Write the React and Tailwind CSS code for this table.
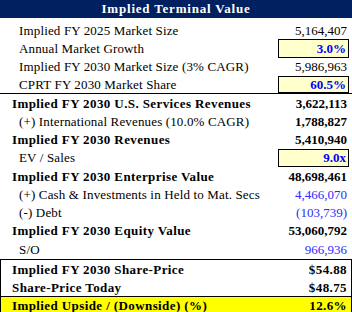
import React from "react";

const rows = [
  { label: "Implied FY 2025 Market Size", value: "5,164,407", indent: true },
  { label: "Annual Market Growth", value: "3.0%", indent: true, input: true },
  { label: "Implied FY 2030 Market Size (3% CAGR)", value: "5,986,963", indent: true },
  { label: "CPRT FY 2030 Market Share", value: "60.5%", indent: true, input: true, line: true },
  { label: "Implied FY 2030 U.S. Services Revenues", value: "3,622,113", bold: true, vbold: true },
  { label: "(+) International Revenues (10.0% CAGR)", value: "1,788,827", indent: true, vbold: true },
  { label: "Implied FY 2030 Revenues", value: "5,410,940", bold: true, vbold: true },
  { label: "EV / Sales", value: "9.0x", indent: true, input: true },
  { label: "Implied FY 2030 Enterprise Value", value: "48,698,461", bold: true, vbold: true },
  { label: "(+) Cash & Investments in Held to Mat. Secs", value: "4,466,070", indent: true, blue: true },
  { label: "(-) Debt", value: "(103,739)", indent: true, blue: true },
  { label: "Implied FY 2030 Equity Value", value: "53,060,792", bold: true, vbold: true },
  { label: "S/O", value: "966,936", indent: true, blue: true },
];

function Row({ r }) {
  return (
    <div className={r.line ? "flex h-[18.25px] items-center border-b border-black" : "flex h-[18.25px] items-center"}>
      <div className={(r.indent ? "pl-[19px] tracking-[0.15px] " : "pl-[12px] ") + (r.bold ? "font-bold tracking-[0.4px]" : "") + " flex-1 whitespace-nowrap leading-none"}>
        {r.label}
      </div>
      {r.input ? (
        <div className="mr-[3px] flex h-full w-[71px] items-center justify-end border border-black bg-[#ffffcc] pr-[2px] font-bold text-[#0000ff]">
          {r.value}
        </div>
      ) : (
        <div className={(r.vbold ? "font-bold " : "") + (r.blue ? "text-[#2b2bff] " : "") + "w-[74px] pr-[5px] text-right leading-none"}>
          {r.value}
        </div>
      )}
    </div>
  );
}

export default function App() {
  return (
    <div className="h-[312px] w-[352px] overflow-hidden bg-white font-['Liberation_Serif',serif] text-[13px] text-black">
      <div className="flex h-[18px] items-center justify-center bg-[#002060] font-bold tracking-[0.8px] text-white">
        Implied Terminal Value
      </div>
      <div className="h-[3px]" />
      {rows.map((r, i) => (
        <Row key={i} r={r} />
      ))}
      <div className="mt-[1px] border border-black font-bold tracking-[0.4px]">
        <div className="flex h-[18px] items-center justify-between pl-[11px] pr-[4px]">
          <span>Implied FY 2030 Share-Price</span>
          <span>$54.88</span>
        </div>
        <div className="flex h-[18px] items-center justify-between pl-[11px] pr-[4px]">
          <span>Share-Price Today</span>
          <span>$48.75</span>
        </div>
        <div className="flex h-[17px] items-center justify-between border-t border-black bg-[#ffff00] pl-[11px] pr-[4px]">
          <span>Implied Upside / (Downside) (%)</span>
          <span>12.6%</span>
        </div>
      </div>
    </div>
  );
}
